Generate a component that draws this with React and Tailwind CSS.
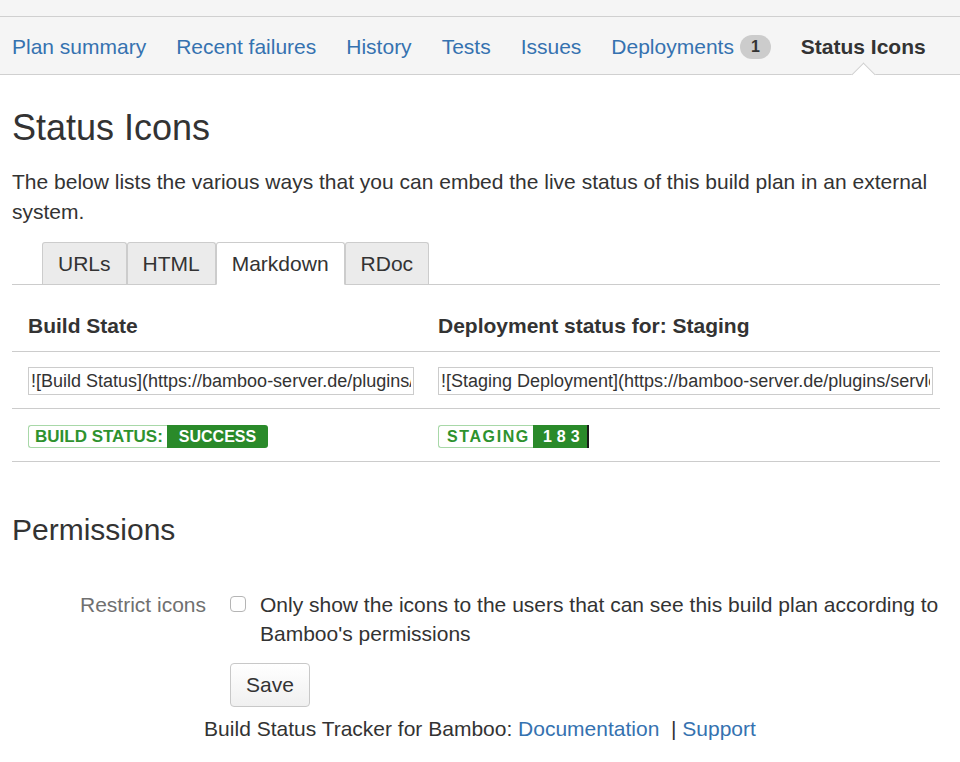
import React from "react";

const navItems = ["Plan summary", "Recent failures", "History", "Tests", "Issues"];
const tabs = ["URLs", "HTML", "Markdown", "RDoc"];

export default function App() {
    return (
        <div className="min-h-screen bg-white text-[#333] font-['Liberation_Sans',Arial,sans-serif]">
            {/* Top band + navigation */}
            <div className="h-[17px] bg-[#f5f5f5] border-b border-[#d0d0d0]" />
            <nav className="h-[58px] bg-[#f5f5f5] border-b border-[#d0d0d0] flex items-stretch pl-3 gap-[30px] text-[21px]">
                {navItems.map((item) => (
                    <a key={item} href="#" className="flex items-center pt-[2px] text-[#3572b0] whitespace-nowrap">
                        {item}
                    </a>
                ))}
                <a href="#" className="flex items-center pt-[2px] gap-[6px] text-[#3572b0] whitespace-nowrap">
                    Deployments
                    <span className="inline-flex items-center justify-center h-[24px] px-[11px] rounded-full bg-[#cccccc] text-[#333] text-[16px] font-bold">1</span>
                </a>
                <span className="relative flex items-center pt-[2px] font-bold whitespace-nowrap">
                    Status Icons
                    {/* active caret */}
                    <span className="absolute left-[54px] bottom-[-9px] w-[17px] h-[17px] rotate-45 bg-white border-l border-t border-[#d0d0d0]" />
                </span>
            </nav>

            <main className="px-3">
                <h1 className="mt-[31px] text-[36px] leading-[43px] font-normal">Status Icons</h1>
                <p className="mt-[18px] text-[21px] leading-[30px] pr-3">
                    The below lists the various ways that you can embed the live status of this build plan in an external system.
                </p>

                {/* Tabs */}
                <div className="mt-[15px] flex pl-[30px] border-b border-[#cccccc] w-[928px]">
                    {tabs.map((t) => {
                        const active = t === "Markdown";
                        return (
                            <div
                                key={t}
                                className={
                                    active
                                        ? "h-[43px] px-[15px] flex items-center text-[21px] bg-white border border-[#cccccc] border-b-white -mb-px rounded-t-[3px]"
                                        : "h-[42px] px-[15px] flex items-center text-[21px] bg-[#ebebeb] border border-b-0 border-[#cccccc] rounded-t-[3px]"
                                }
                            >
                                {t}
                            </div>
                        );
                    })}
                </div>

                {/* Table */}
                <div className="w-[928px] text-[21px]">
                    <div className="flex border-b border-[#cccccc] pt-[29px] pb-[13px] leading-[24px] font-bold">
                        <div className="w-[410px] pl-4 pr-2">Build State</div>
                        <div className="flex-1 pl-4 pr-2">Deployment status for: Staging</div>
                    </div>
                    <div className="flex border-b border-[#cccccc] pt-[15px] pb-[13px]">
                        <div className="w-[410px] pl-4 pr-2">
                            <input
                                readOnly
                                value="![Build Status](https://bamboo-server.de/plugins/servlet/buildStatusIcon/status/PROJ-PLAN)"
                                className="block w-full h-[28px] px-[2px] border border-[#cccccc] text-[18px] text-[#333] bg-white outline-none"
                            />
                        </div>
                        <div className="flex-1 pl-4 pr-[7px]">
                            <input
                                readOnly
                                value="![Staging Deployment](https://bamboo-server.de/plugins/servlet/buildStatusIcon/deployment/Staging)"
                                className="block w-full h-[28px] px-[2px] border border-[#cccccc] text-[18px] text-[#333] bg-white outline-none"
                            />
                        </div>
                    </div>
                    <div className="flex border-b border-[#cccccc] pt-[16px] pb-[13px]">
                        <div className="w-[410px] pl-4 pr-2 flex">
                            <span className="flex h-[23px] font-bold leading-none">
                                <span className="flex items-center pl-[6px] pr-[4px] text-[17px] bg-white border border-[#a8d8a8] border-r-0 rounded-l-[3px] text-[#2e922e]">BUILD STATUS:</span>
                                <span className="flex items-center px-[12px] text-[16px] bg-[#2a8a2a] text-white rounded-r-[3px]">SUCCESS</span>
                            </span>
                        </div>
                        <div className="flex-1 pl-4 pr-2 flex">
                            <span className="flex h-[23px] text-[16px] font-bold leading-none">
                                <span className="flex items-center pl-[8px] pr-[3px] tracking-[1.6px] bg-white border border-[#a8d8a8] border-r-0 rounded-l-[3px] text-[#2e922e]">STAGING</span>
                                <span className="flex items-center pl-[10px] pr-[2px] tracking-[5px] bg-[#2a8a2a] text-white border-r-2 border-[#1a1a1a]">183</span>
                            </span>
                        </div>
                    </div>
                </div>

                {/* Permissions */}
                <h2 className="mt-[51px] text-[30px] leading-[34px] font-normal">Permissions</h2>
                <div className="mt-[43px] flex text-[21px] leading-[29px]">
                    <div className="w-[194px] text-right text-[#707070] shrink-0">Restrict icons</div>
                    <div className="ml-[24px] mt-[6px] w-[16px] h-[16px] shrink-0 rounded-[4px] border border-[#b5b5b5] bg-white" />
                    <div className="ml-[14px] w-[688px]">
                        Only show the icons to the users that can see this build plan according to Bamboo's permissions
                    </div>
                </div>
                <div className="mt-[15px] pl-[218px]">
                    <button
                        type="button"
                        className="w-[80px] h-[44px] text-[21px] text-[#333] bg-gradient-to-b from-white to-[#f0f0f0] border border-[#c8c8c8] rounded-[4px]"
                    >
                        Save
                    </button>
                </div>
            </main>

            <footer className="mt-[7px] text-center text-[21px] leading-[30px]">
                Build Status Tracker for Bamboo: <a href="#" className="text-[#3572b0]">Documentation</a>
                {"\u00a0 | "}
                <a href="#" className="text-[#3572b0]">Support</a>
            </footer>
        </div>
    );
}
